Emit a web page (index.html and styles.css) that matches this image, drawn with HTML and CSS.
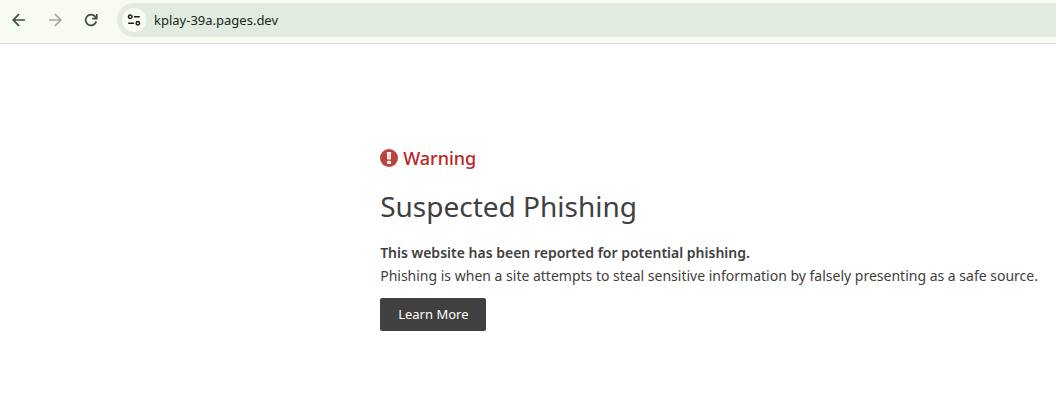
FILE: index.html
```html
<!DOCTYPE html>
<html lang="en">
<head>
    <meta charset="utf-8">
    <title>Suspected Phishing</title>
    <link rel="stylesheet" href="styles.css">
</head>
<body>
    <header class="toolbar">
        <button type="button" class="nav-button" aria-label="Back">
            <svg width="20" height="20" viewBox="0 0 20 20">
                <path d="M16 10H4.5M10 4.2L4.2 10l5.8 5.8"/>
            </svg>
        </button>
        <button type="button" class="nav-button" aria-label="Forward" disabled>
            <svg width="20" height="20" viewBox="0 0 20 20">
                <path d="M4 10h11.5M10 4.2l5.8 5.8-5.8 5.8"/>
            </svg>
        </button>
        <button type="button" class="nav-button" aria-label="Reload">
            <svg width="20" height="20" viewBox="0 0 20 20">
                <path d="M15.3 11.2A5.4 5.4 0 1 1 14.2 6.6L15.8 8.2M15.8 4v4.6h-4.6"/>
            </svg>
        </button>
        <div class="address-bar">
            <button type="button" class="site-info" aria-label="View site information">
                <svg width="14" height="14" viewBox="0 0 14 14">
                    <circle cx="3.2" cy="3.7" r="1.7"/>
                    <path d="M7 3.7h5.8M1.2 10.3H7"/>
                    <circle cx="10.8" cy="10.3" r="1.7"/>
                </svg>
            </button>
            <input type="text" class="address" aria-label="Address" value="kplay-39a.pages.dev" spellcheck="false">
        </div>
    </header>

    <main class="content">
        <p class="warning">
            <svg width="18" height="18" viewBox="0 0 18 18" aria-hidden="true">
                <circle cx="9" cy="9" r="9" fill="#bd413c"/>
                <path d="M6.8 3h4.4l-.5 7.6H7.3z" fill="#fff"/>
                <path d="M8.7 4.5h.6v4.4h-.6z" fill="#d98883"/>
                <rect x="7" y="11.8" width="4" height="3.2" rx="1" fill="#fff"/>
            </svg>
            Warning
        </p>
        <h1>Suspected Phishing</h1>
        <p class="message">
            <strong>This website has been reported for potential phishing.</strong><br>
            Phishing is when a site attempts to steal sensitive information by falsely presenting as a safe source.
        </p>
        <a href="#" class="learn-more">Learn More</a>
    </main>
</body>
</html>
```
FILE: styles.css
```css
* {
    box-sizing: border-box;
}

body {
    margin: 0;
    background-color: #fff;
    color: #404040;
    font-family: "Noto Sans", "Open Sans", sans-serif;
    font-size: 14px;
}

/* Browser toolbar */
.toolbar {
    display: flex;
    align-items: center;
    gap: 8px;
    padding: 3px 0 6px 5px;
    background-color: #f8fbf1;
    border-bottom: 1px solid #dcdfd7;
}

.nav-button {
    display: flex;
    align-items: center;
    justify-content: center;
    width: 28px;
    height: 28px;
    padding: 0;
    border: 0;
    background: none;
    color: #3c5140;
}

.nav-button:disabled {
    color: #a4aaa1;
}

.nav-button svg,
.site-info svg {
    fill: none;
    stroke: currentColor;
    stroke-width: 1.7;
}

.site-info svg {
    stroke-width: 1.5;
}

.address-bar {
    display: flex;
    flex: 1;
    align-items: center;
    gap: 8px;
    height: 34px;
    margin-left: 4px;
    padding-left: 5px;
    border-radius: 17px 0 0 17px;
    background-color: #e2ebe0;
}

.site-info {
    display: flex;
    align-items: center;
    justify-content: center;
    width: 24px;
    height: 24px;
    padding: 0;
    border: 0;
    border-radius: 50%;
    background-color: #f8fbf1;
    color: #1b1f1b;
}

.address {
    flex: 1;
    padding: 0;
    border: 0;
    outline: 0;
    background: none;
    color: #1b1f1b;
    font-family: inherit;
    font-size: 13px;
}

/* Warning page */
.content {
    padding: 100px 0 60px 36%;
}

.warning {
    display: flex;
    align-items: center;
    gap: 5px;
    margin: 0 0 15px;
    color: #bd2426;
    font-size: 18px;
    font-weight: 500;
    line-height: 28px;
}

h1 {
    margin: 0 0 16px;
    font-size: 28px;
    font-weight: 400;
    line-height: 38px;
}

.message {
    margin: 0 0 11px;
    line-height: 23px;
}

.message strong {
    font-weight: 600;
}

.learn-more {
    display: inline-block;
    padding: 0 18px;
    border-radius: 2px;
    background-color: #404040;
    color: #fff;
    font-size: 13px;
    line-height: 33px;
    text-decoration: none;
}
```
